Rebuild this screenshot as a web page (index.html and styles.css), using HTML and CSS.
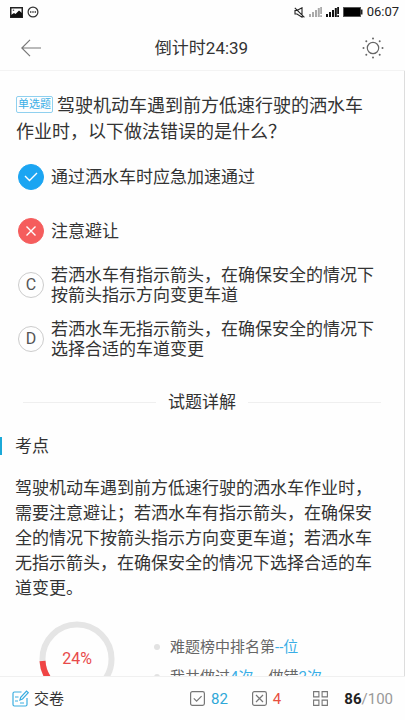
FILE: index.html
```html
<!DOCTYPE html>
<html lang="zh-CN">
<head>
<meta charset="utf-8">
<meta name="viewport" content="width=device-width, initial-scale=1">
<title>倒计时24:39</title>
<link rel="stylesheet" href="styles.css">
</head>
<body>
<div class="status">
  <svg width="13" height="11" viewBox="0 0 13 11"><rect x=".75" y=".75" width="11.5" height="9.5" fill="#fff" stroke="#222" stroke-width="1.5"/><path d="M1 8l3-2 1.500 1L9 3.500 12 6v4H1z" fill="#111"/><circle cx="3.500" cy="3.200" r=".8" fill="#555"/></svg>
  <svg width="12" height="12" viewBox="0 0 12 12"><circle cx="6" cy="6" r="4.900" fill="none" stroke="#333" stroke-width="1.200"/><path d="M3 6h1.400M5.300 6h1.400M7.600 6H9" stroke="#333" stroke-width="1.400"/></svg>
  <span class="spacer"></span>
  <svg width="11" height="11" viewBox="0 0 11 11" fill="none" stroke="#222" stroke-width="1.100"><path d="M1 3.500h2L8 .8v9.400L3 7H1zM.8.800l9.600 9.600"/></svg>
  <svg class="signal faint" width="13" height="10" viewBox="0 0 13 10"><path d="M1 7v3M4 5v5M7 3v7M9.800 1v9M12.200 0v7M12.200 8.300V10"/></svg>
  <svg class="signal" width="13" height="10" viewBox="0 0 13 10"><path d="M1 7v3M4 5v5M7 3v7M9.800 1v9M12.200 0v7M12.200 8.300V10"/></svg>
  <svg width="20" height="10" viewBox="0 0 20 10"><rect x=".5" y=".5" width="17" height="9" fill="#000" stroke="#555"/><path d="M18.500 2.500v5" stroke="#222" stroke-width="2"/></svg>
  <time>06:07</time>
</div>
<header class="topbar">
  <button aria-label="返回"><svg width="20" height="18" viewBox="0 0 20 18" fill="none" stroke="#777" stroke-width="1.200"><path d="M20 9H1M9 .8L.8 9 9 17.200"/></svg></button>
  <h1>倒计时24:39</h1>
  <button aria-label="亮度"><svg width="22" height="22" viewBox="0 0 22 22" fill="none" stroke="#666" stroke-width="1.200"><circle cx="11" cy="11" r="5.700"/><g fill="#666" stroke="none"><circle cx="11" cy="1.500" r="1"/><circle cx="11" cy="20.500" r="1"/><circle cx="1.500" cy="11" r="1"/><circle cx="20.500" cy="11" r="1"/><circle cx="4.300" cy="4.300" r="1"/><circle cx="17.700" cy="4.300" r="1"/><circle cx="4.300" cy="17.700" r="1"/><circle cx="17.700" cy="17.700" r="1"/></g></svg></button>
</header>
<main>
  <h2 class="question"><span class="tag">单选题</span>驾驶机动车遇到前方低速行驶的洒水车作业时，以下做法错误的是什么？</h2>
  <div class="options">
    <button class="option"><span class="mark right"><svg width="14" height="10" viewBox="0 0 14 10" fill="none" stroke="#fff" stroke-width="1.400"><path d="M1 4l4.500 4.500L13 1"/></svg></span><span>通过洒水车时应急加速通过</span></button>
    <button class="option"><span class="mark wrong"><svg width="10" height="10" viewBox="0 0 10 10" fill="none" stroke="#fff" stroke-width="1.400"><path d="M.5.500l9 9M9.500.500l-9 9"/></svg></span><span>注意避让</span></button>
    <button class="option"><span class="mark">C</span><span>若洒水车有指示箭头，在确保安全的情况下按箭头指示方向变更车道</span></button>
    <button class="option"><span class="mark">D</span><span>若洒水车无指示箭头，在确保安全的情况下选择合适的车道变更</span></button>
  </div>
  <h2 class="divider">试题详解</h2>
  <h3 class="point">考点</h3>
  <p class="explain">驾驶机动车遇到前方低速行驶的洒水车作业时，需要注意避让；若洒水车有指示箭头，在确保安全的情况下按箭头指示方向变更车道；若洒水车无指示箭头，在确保安全的情况下选择合适的车道变更。</p>
  <section class="stats">
    <div class="ring">
      <svg width="76" height="76" viewBox="0 0 76 76" fill="none" stroke-width="6"><circle cx="38" cy="38" r="34.500" stroke="#e5e5e5"/><path d="M3.500 40A34.500 34.500 0 0 0 38 72.500" stroke="#f04545"/></svg>
      <span>24%</span>
    </div>
    <ul>
      <li>难题榜中排名第<b>--位</b></li>
      <li>我共做过<b>4次</b>，做错<b>2次</b></li>
    </ul>
  </section>
</main>
<footer>
  <button class="submit"><svg width="17" height="17" viewBox="0 0 17 17" fill="none" stroke="#3aade0" stroke-width="1.200"><path d="M9.500 2H2.500Q1 2 1 3.500v11Q1 16 2.500 16h11q1.500 0 1.500-1.500V8M3 7h3.500M3 11h3M8 10l.7-2.700L14.500 1 16.300 2.700 10.500 9zM8 13h4"/></svg>交卷</button>
  <span class="count correct"><svg width="15" height="15" viewBox="0 0 15 15" fill="none" stroke="#777" stroke-width="1.200"><rect x=".6" y=".6" width="13.800" height="13.800" rx="1.800"/><path d="M3.800 7.300l2.800 2.800 5-5"/></svg>82</span>
  <span class="count missed"><svg width="15" height="15" viewBox="0 0 15 15" fill="none" stroke="#777" stroke-width="1.200"><rect x=".6" y=".6" width="13.800" height="13.800" rx="1.800"/><path d="M4 4l7 7M11 4l-7 7"/></svg>4</span>
  <button class="progress"><svg width="15" height="15" viewBox="0 0 15 15" fill="none" stroke="#777" stroke-width="1.100"><path d="M.6.600h5.300v5.300H.6zM9.100.600h5.300v5.300H9.100zM.6 9.100h5.300v5.300H.6zM9.100 9.100h5.300v5.300H9.100z"/></svg><span><strong>86</strong>/100</span></button>
</footer>
</body>
</html>
```
FILE: styles.css
```css
* { box-sizing: border-box; margin: 0; padding: 0; }
body {
  height: 100vh;
  display: flex;
  flex-direction: column;
  background: #fefefe;
  color: #333;
  font: 17px/20px Roboto, "Noto Sans CJK SC", sans-serif;
}
button { border: 0; background: none; color: inherit; font: inherit; text-align: left; }
svg { display: block; flex: none; }
h1, h2, h3 { font-size: 17px; font-weight: 400; }

.status {
  flex: none;
  height: 24px;
  padding: 0 6px 0 10px;
  display: flex;
  align-items: center;
  gap: 4px;
  font-size: 13px;
  color: #222;
}
.spacer { flex: 1; }
.signal { fill: none; stroke: #111; stroke-width: 2; }
.faint { stroke: #aaa; }

.topbar {
  flex: none;
  height: 47px;
  padding: 1px 21px 0;
  display: flex;
  align-items: center;
  justify-content: space-between;
  border-bottom: 1px solid #f3f3f3;
}

main {
  flex: 1;
  min-height: 0;
  overflow-y: auto;
  scrollbar-width: none;
  border-right: 1px solid #ddd;
}
.question {
  padding: 22px 28px 5px 16px;
  font-size: 18px;
  line-height: 26px;
}
.tag {
  display: inline-block;
  margin-right: 4px;
  padding: 0 1px;
  border: 1px solid #8fd0ef;
  border-radius: 2px;
  color: #3aaee6;
  font-size: 11px;
  line-height: 15px;
  vertical-align: 4px;
}
.option {
  width: 100%;
  min-height: 54px;
  padding: 0 18px;
  display: flex;
  align-items: center;
  gap: 7px;
}
.mark {
  flex: none;
  width: 26px;
  height: 26px;
  display: grid;
  place-items: center;
  border: 1px solid #ccc;
  border-radius: 50%;
  font-size: 16px;
  color: #555;
}
.right { background: #1ba5f2; border-color: #1ba5f2; }
.wrong { background: #f55d5d; border-color: #f55d5d; }

.divider {
  margin: 26px 23px 0;
  display: flex;
  align-items: center;
  gap: 12px;
}
.divider::before, .divider::after { content: ""; flex: 1; height: 1px; background: #efefef; }
.point {
  margin-top: 25px;
  padding-left: 13px;
  border-left: 2px solid #1ba9d8;
  line-height: 18px;
}
.explain { padding: 21px 28px 0 15px; line-height: 25px; }
.stats {
  padding: 20px 39px;
  display: flex;
  gap: 39px;
}
.ring { display: grid; place-items: center; }
.ring > * { grid-area: 1 / 1; }
.ring span { color: #e84a4a; font-size: 16px; }
ul { padding-top: 11px; list-style: none; }
li {
  display: flex;
  align-items: center;
  color: #666;
  font-size: 15px;
  line-height: 30px;
}
li::before {
  content: "";
  width: 6px;
  height: 6px;
  margin-right: 10px;
  border-radius: 50%;
  background: #e2e2e2;
}
b { color: #3aaee6; font-weight: 400; }

footer {
  flex: none;
  height: 44px;
  padding: 0 12px;
  display: flex;
  align-items: center;
  border-top: 1px solid #f0f0f0;
  font-size: 15px;
}
.submit { display: flex; align-items: center; gap: 5px; margin-right: auto; }
.count { display: flex; align-items: center; gap: 6px; }
.correct { margin-right: 24px; color: #2fa8d8; }
.missed { margin-right: 32px; color: #e8503f; }
.progress { display: flex; align-items: center; gap: 16px; color: #999; }
strong { color: #222; font-weight: 700; }
```
